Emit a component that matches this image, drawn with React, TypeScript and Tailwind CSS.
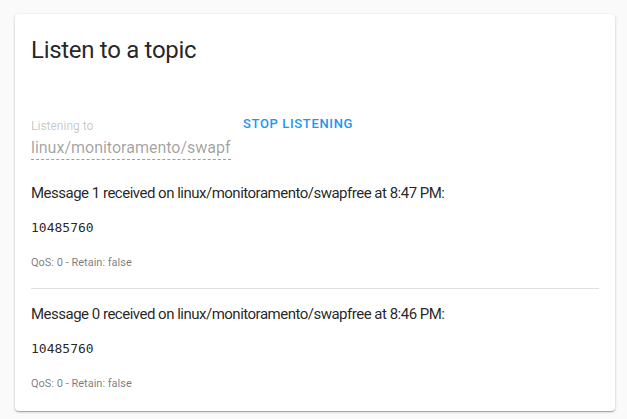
import React from 'react';

const messages = [
  { id: 1, topic: 'linux/monitoramento/swapfree', time: '8:47 PM', payload: '10485760', qos: 0, retain: false },
  { id: 0, topic: 'linux/monitoramento/swapfree', time: '8:46 PM', payload: '10485760', qos: 0, retain: false },
];

const App: React.FC = () => {
  return (
    <div className="min-h-[419px] w-[627px] bg-[#fafafa] pt-[14px] font-['Roboto',sans-serif]">
      <div className="mx-[15px] w-[600px] rounded bg-white px-4 pb-[2px] pt-[18px] shadow-[0_1px_3px_0_rgba(0,0,0,0.2),0_1px_1px_0_rgba(0,0,0,0.14),0_2px_1px_-1px_rgba(0,0,0,0.12)]">
        <h5 className="text-2xl leading-[36px] tracking-[-0.3px] text-[rgba(0,0,0,0.87)]">Listen to a topic</h5>

        <div className="mt-[52px] flex items-start gap-3">
          <div className="w-[200px]">
            <label className="block text-xs leading-none text-[rgba(0,0,0,0.24)]">Listening to</label>
            <div className="mt-[6px] overflow-hidden whitespace-nowrap border-b border-dashed border-[rgba(0,0,0,0.38)] pb-[1px] text-base leading-[20px] text-[rgba(0,0,0,0.38)]">
              linux/monitoramento/swapfree
            </div>
          </div>
          <button className="mt-[-7px] px-0 py-[1px] text-[13px] font-medium uppercase tracking-[0.05em] text-[#2196f3]">
            Stop listening
          </button>
        </div>

        <div className="mt-[8px]">
          {messages.map((m, idx) => (
            <div key={m.id}>
              {idx > 0 && <hr className="my-0 border-t border-[rgba(0,0,0,0.12)]" />}
              <div className="pt-[15px] pb-[18px]">
                <p className="text-[15px] leading-[20px] tracking-[-0.5px] text-[rgba(0,0,0,0.87)]">
                  Message {m.id} received on {m.topic} at {m.time}:
                </p>
                <pre className="mt-[15px] font-['DejaVu_Sans_Mono',monospace] text-[13px] leading-[20px] text-[rgba(0,0,0,0.87)]">{m.payload}</pre>
                <p className="mt-[18px] text-[11px] leading-[14px] text-[rgba(0,0,0,0.54)]">
                  QoS: {m.qos} - Retain: {String(m.retain)}
                </p>
              </div>
            </div>
          ))}
        </div>
      </div>
    </div>
  );
};

export default App;
